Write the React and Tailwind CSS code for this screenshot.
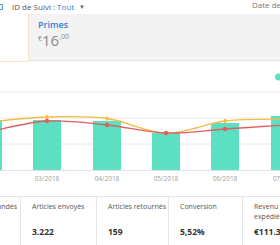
import React from 'react';

const months = [
  { x: -12, bar: 58, label: '' },
  { x: 47, bar: 58, label: '03/2018' },
  { x: 107, bar: 59, label: '04/2018' },
  { x: 166, bar: 71, label: '05/2018' },
  { x: 225, bar: 61, label: '06/2018' },
  { x: 285, bar: 54, label: '07/2018' },
];

const orange = [[-12, 60], [47, 55], [107, 56.5], [166, 71], [225, 59], [285, 57]];
const red = [[-12, 70], [47, 59], [107, 63], [166, 71], [225, 67], [285, 63]];

// catmull-rom to bezier
function smooth(pts) {
  let d = `M${pts[0][0]},${pts[0][1]}`;
  for (let i = 0; i < pts.length - 1; i++) {
    const p0 = pts[i - 1] || pts[i];
    const p1 = pts[i];
    const p2 = pts[i + 1];
    const p3 = pts[i + 2] || p2;
    const c1 = [p1[0] + (p2[0] - p0[0]) / 6, p1[1] + (p2[1] - p0[1]) / 6];
    const c2 = [p2[0] - (p3[0] - p1[0]) / 6, p2[1] - (p3[1] - p1[1]) / 6];
    d += ` C${c1[0]},${c1[1]} ${c2[0]},${c2[1]} ${p2[0]},${p2[1]}`;
  }
  return d;
}

const stats = [
  { label: 'Articles commandés', value: '3.409', w: 'w-[21px]' },
  { label: 'Articles envoyés', value: '3.222', w: 'w-[76px]' },
  { label: 'Articles retournés', value: '159', w: 'w-[72px]' },
  { label: 'Conversion', value: '5,52%', w: 'w-[74px]' },
  { label: ['Revenu', 'expédiés'], value: '€111.345,00', w: 'w-[60px]' },
];

export default function App() {
  return (
    <div className="w-[280px] h-[245px] overflow-hidden bg-white text-[#333]" style={{ fontFamily: '"Open Sans", "Noto Sans", sans-serif' }}>
      {/* top bar */}
      <div className="h-[14px] flex items-center relative">
        <div className="w-[3px] h-[6px] border border-l-0 border-[#5b9bd5] rounded-r-[1px] bg-[#eef5fc]" />
        <div className="ml-[9px] flex items-center text-[8px] leading-none text-[#555]">
          <span>ID de Suivi :</span>
          <span className="ml-[2px] text-[#3b7fd0]">Tout</span>
          <span className="ml-[5px] text-[6px] text-[#666]">▼</span>
        </div>
        <span className="absolute left-[252px] top-[1px] text-[8px] leading-none text-[#777] whitespace-nowrap">Date de Livraison</span>
      </div>

      {/* summary row */}
      <div className="flex h-[48px]">
        <div className="w-[29px] h-[48px] bg-white border-r border-b border-[#f6e3c8]" />
        <div className="flex-1 h-[47px] bg-[#f3f3f3] border-b border-[#e2e2e2] pl-[9px] pt-[5px]">
          <div className="text-[9px] leading-[12px] font-semibold text-[#3b7fd0]">Primes</div>
          <div className="flex items-start text-[#8a8a8a] mt-[2px]">
            <span className="text-[7px] leading-none mt-[2px]">€</span>
            <span className="text-[15px] leading-none">16</span>
            <span className="text-[7px] leading-none">,00</span>
          </div>
        </div>
      </div>

      {/* chart */}
      <svg width="280" height="134" className="block">
        {[30, 56, 82].map((y) => (
          <line key={y} x1="0" x2="280" y1={y} y2={y} stroke="#e8e8e8" strokeWidth="1" />
        ))}
        {months.map((m) => (
          <rect key={m.x} x={m.x - 14} y={m.bar} width="28" height={108 - m.bar} fill="#5de0c2" />
        ))}
        <line x1="0" x2="280" y1="108.5" y2="108.5" stroke="#dde3ee" strokeWidth="1" />
        <path d={smooth(orange)} fill="none" stroke="#f5bb45" strokeWidth="1.3" />
        <path d={smooth(red)} fill="none" stroke="#e05e5e" strokeWidth="1.3" />
        {orange.slice(1, 5).map(([x, y]) => (
          <rect key={x} x={x - 1.2} y={y - 2} width="2.4" height="4" fill="#f5bb45" />
        ))}
        {red.slice(1, 5).map(([x, y]) => (
          <circle key={x} cx={x} cy={y} r="2.2" fill="#e05e5e" />
        ))}
        <circle cx="278.5" cy="15" r="3.5" fill="#5de0c2" />
        {months.filter((m) => m.label).map((m) => (
          <text key={m.x} x={m.x} y="119" textAnchor="middle" fontSize="6.5" fill="#a0a0a0">{m.label}</text>
        ))}
      </svg>

      {/* stats */}
      <div className="flex h-[49px] border-t border-[#e6e6e6]">
        {stats.map((s, i) => (
          <div
            key={i}
            className={`${s.w} shrink-0 h-full ${i < stats.length - 1 ? 'border-r border-[#e6e6e6]' : ''} relative overflow-hidden`}
          >
            {i === 0 ? (
              <div className="absolute right-[3px] top-[5px] text-[7px] leading-[10px] text-[#555] whitespace-nowrap">{s.label}</div>
            ) : (
              <div className="pl-[11px] pt-[5px] text-[7px] leading-[10px] text-[#555] w-[76px] whitespace-nowrap">
                {Array.isArray(s.label) ? s.label.map((l) => <div key={l}>{l}</div>) : s.label}
              </div>
            )}
            {i > 0 && (
              <div className="absolute left-[11px] top-[31px] text-[8.5px] leading-none font-bold text-[#333] whitespace-nowrap">{s.value}</div>
            )}
          </div>
        ))}
      </div>
    </div>
  );
}
